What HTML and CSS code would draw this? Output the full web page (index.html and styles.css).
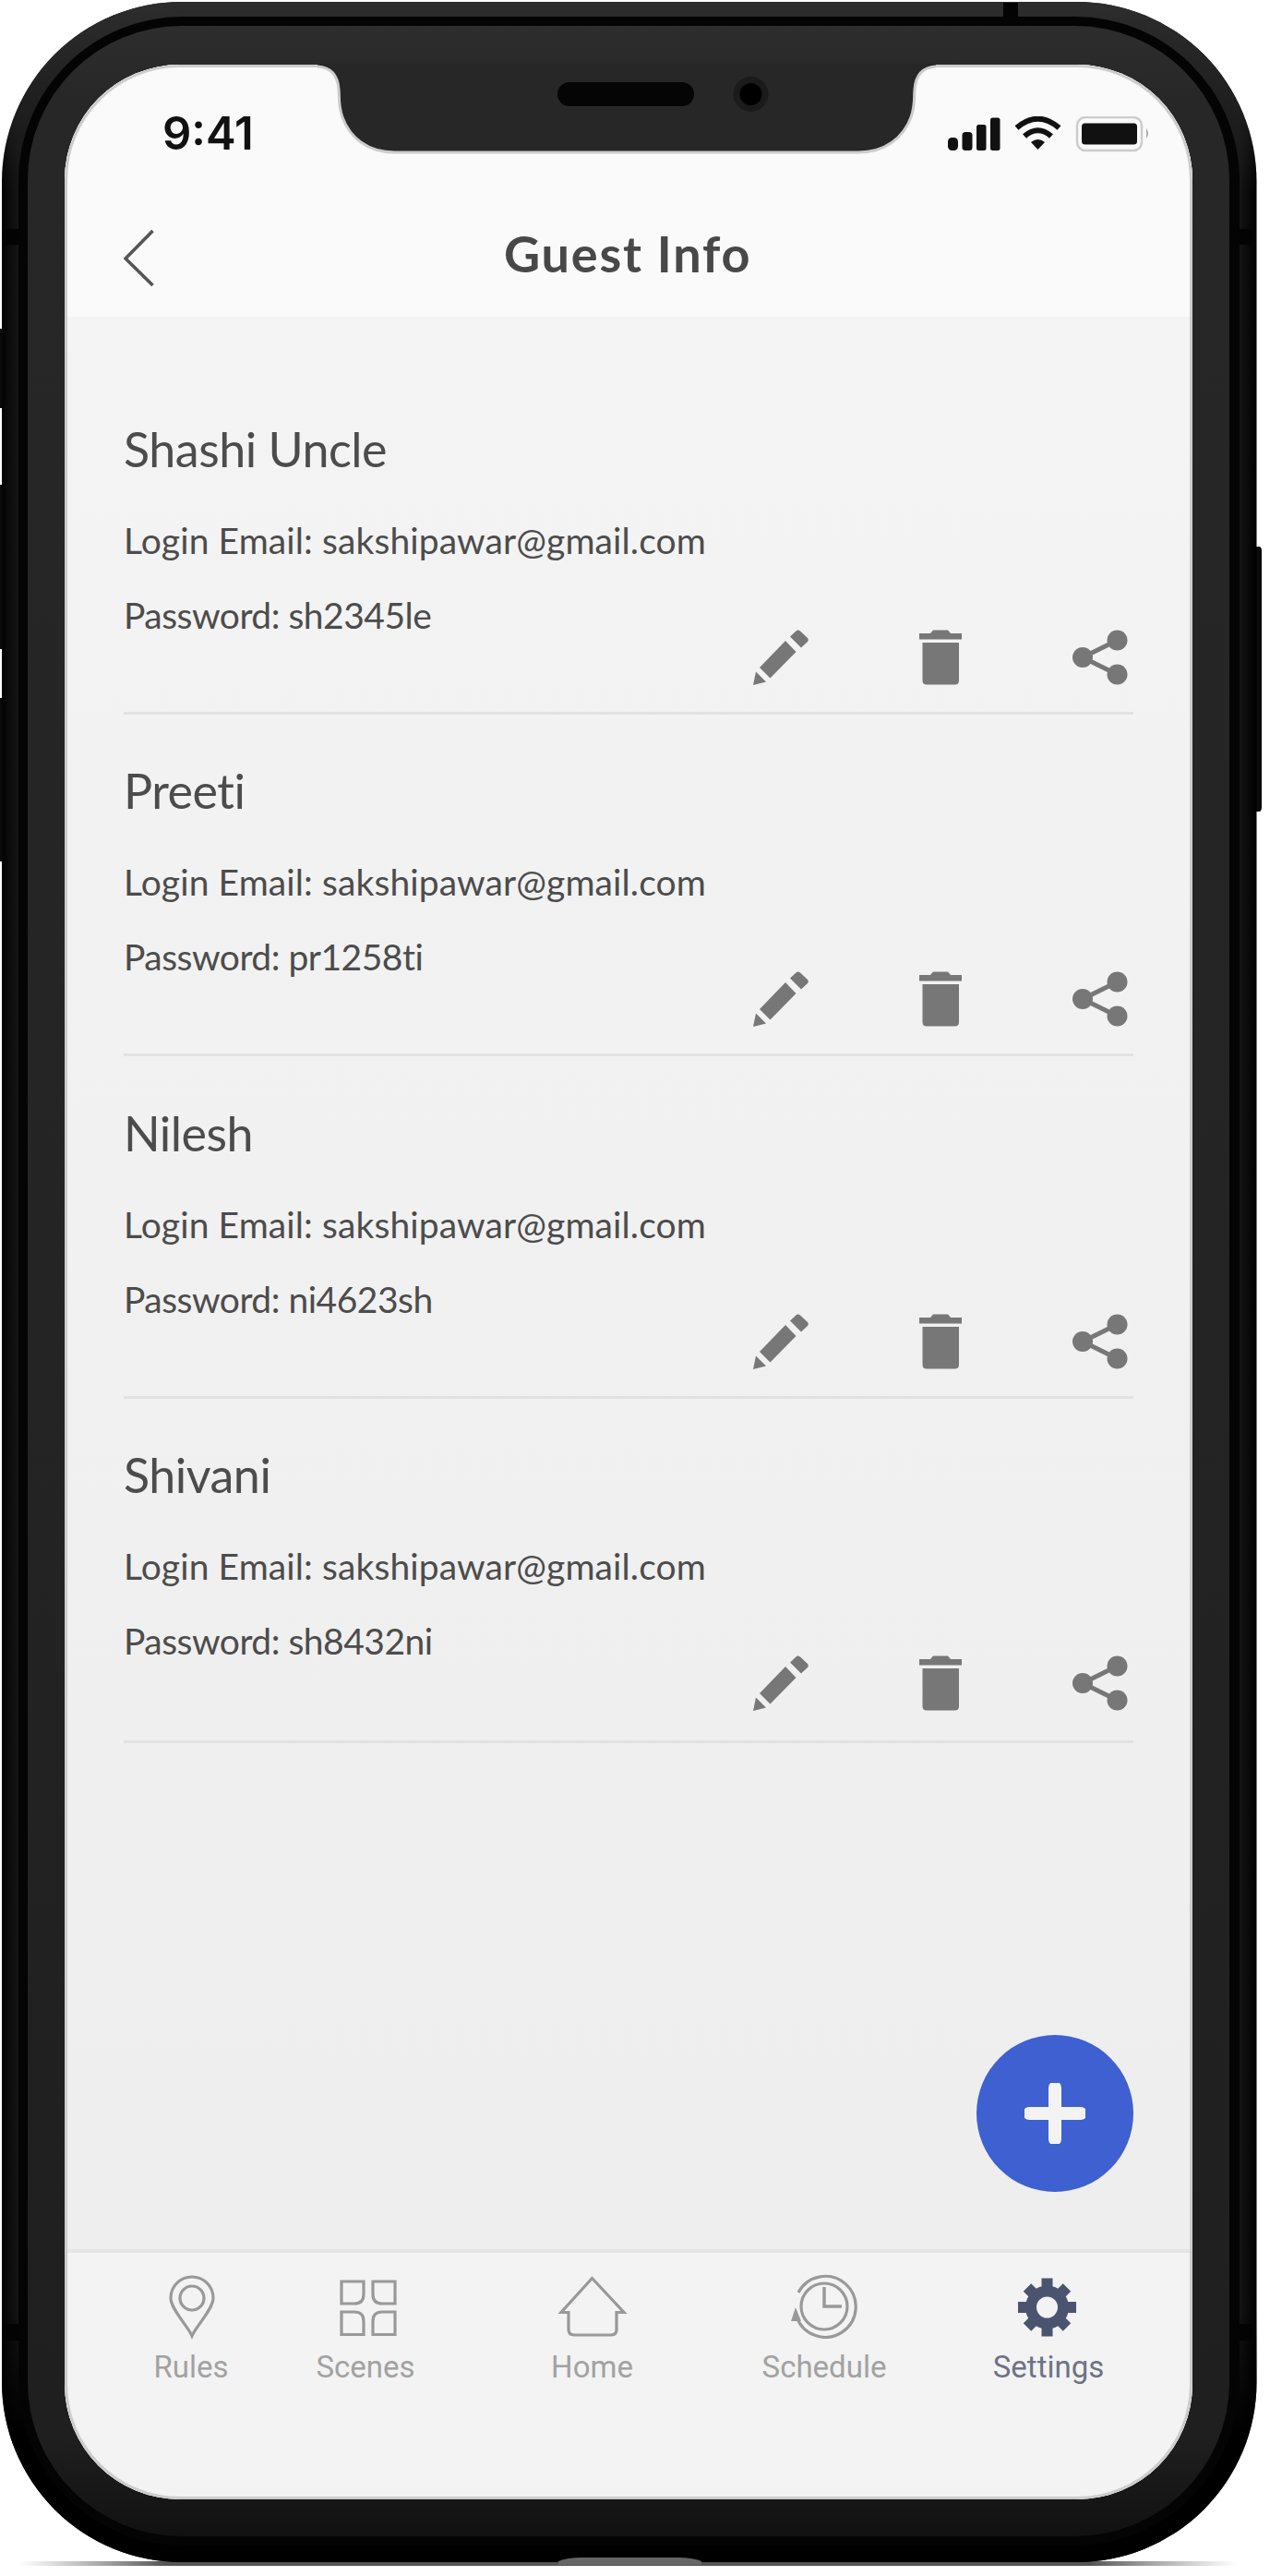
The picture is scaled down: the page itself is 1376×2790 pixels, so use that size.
FILE: index.html
```html
<!DOCTYPE html>
<html lang="en">
<head>
<meta charset="utf-8">
<title>Guest Info</title>
<link rel="stylesheet" href="styles.css">
</head>
<body>
<svg class="symbols" aria-hidden="true">
  <symbol id="edit" viewBox="0 0 60 60"><path d="M0 60 3 45.500 14 56.500ZM7 41 35 12 46.500 24 18.500 52.500ZM40 7.500 47 1Q49 0 51 1.500L59 9Q60.500 11 59 13L52 19.500Z"/></symbol>
  <symbol id="trash" viewBox="0 0 46 60"><path d="M0 4H12L15 0.500H31L34 4H46V10.500H0ZM3.500 14H43V55Q43 59.500 38.500 59.500H8Q3.500 59.500 3.500 55Z"/></symbol>
  <symbol id="share" viewBox="0 0 60 60"><circle cx="11" cy="30" r="11"/><circle cx="48.500" cy="11.500" r="11"/><circle cx="48.500" cy="48.500" r="11"/><path d="M48.500 11.500 11 30 48.500 48.500" fill="none" stroke="#777" stroke-width="5"/></symbol>
</svg>
<div class="stage">
  <svg class="device" viewBox="0 0 1376 2790" aria-hidden="true">
    <defs>
      <linearGradient id="metal" x1="0" x2="1" y1="0" y2="0"><stop offset="0" stop-color="#020202"/><stop offset=".006" stop-color="#0b0b0b"/><stop offset=".013" stop-color="#141414"/><stop offset=".987" stop-color="#141414"/><stop offset=".994" stop-color="#080808"/><stop offset="1" stop-color="#000"/></linearGradient>
      <linearGradient id="sheen" x1="0" x2="0" y1="0" y2="1"><stop offset="0" stop-color="#2d2d2d"/><stop offset=".03" stop-color="#222"/><stop offset=".075" stop-color="#222" stop-opacity="0"/><stop offset=".9" stop-color="#000" stop-opacity="0"/><stop offset=".95" stop-color="#000"/></linearGradient>
      <linearGradient id="bezel" x1="0" x2="0" y1="0" y2="1"><stop offset="0" stop-color="#2d2d2d"/><stop offset=".03" stop-color="#272727"/><stop offset=".5" stop-color="#242424"/><stop offset=".96" stop-color="#1f1f1f"/><stop offset="1" stop-color="#111"/></linearGradient>
      <linearGradient id="floor" x1="0" x2="1" y1="0" y2="0"><stop offset="0" stop-color="#777" stop-opacity="0"/><stop offset=".12" stop-color="#555"/><stop offset=".88" stop-color="#555"/><stop offset="1" stop-color="#777" stop-opacity="0"/></linearGradient>
    </defs>
    <rect x="20" y="2774" width="1320" height="5" fill="url(#floor)"/>
    <path d="M0 356H6V442H0ZM0 525H6V703H0ZM0 756H6V933H0ZM1358 592H1364Q1367 592 1367 597V874Q1367 879 1364 879H1358Z" fill="#0a0a0a"/>
    <rect x="2" y="2" width="1359.500" height="2773" rx="195" fill="url(#metal)"/>
    <rect x="2" y="2" width="1359.500" height="2773" rx="195" fill="url(#sheen)"/>
    <path d="M1087 3H1103V20H1087ZM3 248H22V265H3ZM1342 248H1361V265H1342ZM3 2517H22V2535H3ZM1342 2517H1361V2535H1342Z" fill="#030303"/>
    <rect x="20" y="18" width="1323" height="2739" rx="178" fill="#040404"/>
    <rect x="30" y="28" width="1302" height="2719" rx="167" fill="url(#bezel)"/>
    <path d="M605 2774Q615 2770 630 2770H735Q750 2770 760 2774V2778H605Z" fill="#666"/>
  </svg>
  <main class="screen">
    <header class="top">
      <div class="status">
        <span class="time">9:41</span>
        <svg class="signals" viewBox="0 0 220 40" aria-hidden="true">
          <g fill="#111"><rect x="1" y="23" width="11" height="14" rx="4.500"/><rect x="16.500" y="17" width="11" height="20" rx="3.500"/><rect x="32" y="9" width="10.500" height="28" rx="2.500"/><rect x="47" y="1.500" width="10.500" height="35.500" rx="2.500"/></g>
          <g fill="none" stroke="#111" stroke-width="6"><path d="M75.500 12.500Q98.500-7 121.500 12.500"/><path d="M84 21.500Q98.500 9 113 21.500"/></g>
          <path d="M91 28Q98.500 22 106 28L98.500 36Z" fill="#111"/>
          <rect x="141" y="1" width="70" height="36" rx="9" fill="none" stroke="#ccc" stroke-width="2.500"/><rect x="146" y="7.500" width="60" height="23" rx="3.500" fill="#111"/><path d="M216 13Q220 18.500 216 24Z" fill="#aaa"/>
        </svg>
      </div>
      <div class="titlebar">
        <svg class="back" viewBox="0 0 34 64"><path d="M31.500 2 2 32 31.500 61" fill="none" stroke="#555" stroke-width="3.600"/></svg>
        <h1 class="title">Guest Info</h1>
      </div>
    </header>
    <section class="guests">
      <article class="guest"><h2 class="name">Shashi Uncle</h2><p class="line">Login Email: sakshipawar@gmail.com</p><p class="line secret">Password: sh2345le</p><div class="actions"><svg class="edit"><use href="#edit"/></svg><svg class="trash"><use href="#trash"/></svg><svg class="share"><use href="#share"/></svg></div></article>
      <article class="guest"><h2 class="name">Preeti</h2><p class="line">Login Email: sakshipawar@gmail.com</p><p class="line secret">Password: pr1258ti</p><div class="actions"><svg class="edit"><use href="#edit"/></svg><svg class="trash"><use href="#trash"/></svg><svg class="share"><use href="#share"/></svg></div></article>
      <article class="guest"><h2 class="name">Nilesh</h2><p class="line">Login Email: sakshipawar@gmail.com</p><p class="line secret">Password: ni4623sh</p><div class="actions"><svg class="edit"><use href="#edit"/></svg><svg class="trash"><use href="#trash"/></svg><svg class="share"><use href="#share"/></svg></div></article>
      <article class="guest last"><h2 class="name">Shivani</h2><p class="line">Login Email: sakshipawar@gmail.com</p><p class="line secret">Password: sh8432ni</p><div class="actions"><svg class="edit"><use href="#edit"/></svg><svg class="trash"><use href="#trash"/></svg><svg class="share"><use href="#share"/></svg></div></article>
    </section>
    <button class="add" aria-label="Add guest"><svg viewBox="0 0 66 66"><path d="M33 5V61M5 33H61" stroke="#f3f3f3" stroke-width="14" stroke-linecap="round"/></svg></button>
    <nav class="nav">
      <a class="tab rules"><svg viewBox="0 0 76 70"><g class="outline"><path d="M39 67C35 57 16 38 16 26A23 23 0 0 1 62 26C62 38 43 57 39 67Z"/><circle cx="39" cy="26" r="13"/></g></svg><span>Rules</span></a>
      <a class="tab scenes"><svg viewBox="0 0 76 70"><g class="outline"><path d="M12 8H36V22Q36 32 26 32H12ZM46 8H70V32H56Q46 32 46 22ZM12 41H26Q36 41 36 51V65.500H12ZM46 65.500V51Q46 41 56 41H70V65.500Z"/></g></svg><span>Scenes</span></a>
      <a class="tab home"><svg viewBox="0 0 76 70"><g class="outline"><path d="M37.500 4.500 4 41.500H12V60Q12 66 18 66H58Q64 66 64 60V41.500H72Z"/></g></svg><span>Home</span></a>
      <a class="tab schedule"><svg viewBox="0 0 76 70"><g class="outline"><path d="M10 20A33 33 0 1 1 8 46"/><circle cx="38" cy="35" r="25"/><path d="M38 14V35H57" stroke-width="3.500"/></g><path d="M7 36 13 51H2Z" fill="#999"/></svg><span>Schedule</span></a>
      <a class="tab settings"><svg viewBox="0 0 76 70"><g fill="none" stroke="#4b546f"><circle cx="36.500" cy="36" r="17.500" stroke-width="12"/><path d="M36.500 4.500V16M36.500 56V67.500M5 36H17M56 36H68M15 14.500 23 22.500M50 49.500 58 57.500M58 14.500 50 22.500M23 49.500 15 57.500" stroke-width="12"/></g></svg><span>Settings</span></a>
    </nav>
  </main>
  <svg class="notch" viewBox="0 0 670 98" aria-hidden="true">
    <path d="M-3-6V3C14 3 22 12 23 28C24 35 22 44 27 58C35 80 54 96 84 96H586C615 96 635 80 643 58C648 44 646 35 647 28C648 12 656 3 673 3V-6Z" fill="#272727" stroke="#ccc" stroke-width="3"/>
    <rect x="260" y="20" width="148" height="26" rx="13" fill="#050505"/><circle cx="469.500" cy="33" r="19" fill="#1b1b1b"/><circle cx="469.500" cy="33" r="12" fill="#000"/>
  </svg>
</div>
</body>
</html>
```
FILE: styles.css
```css
* { box-sizing: border-box; }
body { margin: 0; background: #fff; }
h1, h2, p { margin: 0; font-weight: 400; }
.symbols { position: absolute; width: 0; height: 0; }
.stage { position: relative; width: 1376px; height: 2790px; padding: 70px 84px 83px 70px; overflow: hidden; }
.device { position: absolute; left: 0; top: 0; width: 1376px; height: 2790px; }
.notch { position: absolute; left: 344px; top: 69px; width: 670px; height: 98px; }
.screen { position: relative; width: 1222px; height: 2637px; border-radius: 125px; overflow: hidden; display: flex; flex-direction: column; background: linear-gradient(#f4f4f4 10%, #eee 85%); font-family: Lato, "Open Sans", sans-serif; color: #4c4c4c; }
.screen::after { content: ""; position: absolute; inset: 0; border-radius: 125px; box-shadow: inset 0 0 0 3px #ccc; pointer-events: none; }
.top { height: 273px; flex: none; background: #fafafa; }
.status { height: 145px; padding: 45px 46px 0 106px; display: flex; justify-content: space-between; align-items: flex-start; }
.time { font: 600 49px/60px Inter, sans-serif; letter-spacing: 0; color: #111; }
.signals { width: 220px; height: 40px; margin-top: 11px; }
.titlebar { height: 128px; padding-left: 64px; display: flex; align-items: flex-start; }
.back { width: 34px; height: 64px; margin-top: 33px; }
.title { margin: 30px 0 0 378px; font-size: 54px; line-height: 60px; font-weight: 700; letter-spacing: 1.8px; color: #484848; white-space: nowrap; }
.guests { padding: 97px 64px 0 64px; }
.guest { height: 334px; margin-bottom: 36.4px; padding-top: 16px; border-bottom: 3px solid #e2e2e2; white-space: nowrap; }
.guest.last { height: 337px; }
.name { font-size: 52px; line-height: 60px; margin-bottom: 46px; letter-spacing: -.5px; }
.line { font-size: 39px; line-height: 46px; margin-bottom: 35px; letter-spacing: .1px; }
.secret { letter-spacing: -.5px; }
.actions { display: flex; height: 60px; margin: -42px 6px 0 682px; justify-content: space-between; fill: #777; }
.edit, .share { width: 60px; height: 60px; }
.trash { width: 46px; height: 60px; }
.add { position: absolute; right: 64px; top: 2134px; width: 170px; height: 170px; border: 0; border-radius: 50%; background: #3e60d1; display: grid; place-items: center; padding: 0; }
.add svg { width: 66px; height: 66px; }
.nav { margin-top: auto; height: 271px; flex: none; background: #f3f3f3; border-top: 4px solid #e5e5e5; padding: 23px 30px 0 59px; display: grid; grid-template-columns: 156px 222px 269px 234px 252px; font: 33px/42px Roboto, sans-serif; color: #a2a2a2; }
.tab { display: flex; flex-direction: column; align-items: center; gap: 10px; }
.tab svg { width: 76px; height: 70px; }
.outline { fill: none; stroke: #999; stroke-width: 3.200; }
.settings { color: #6d7385; }
```
